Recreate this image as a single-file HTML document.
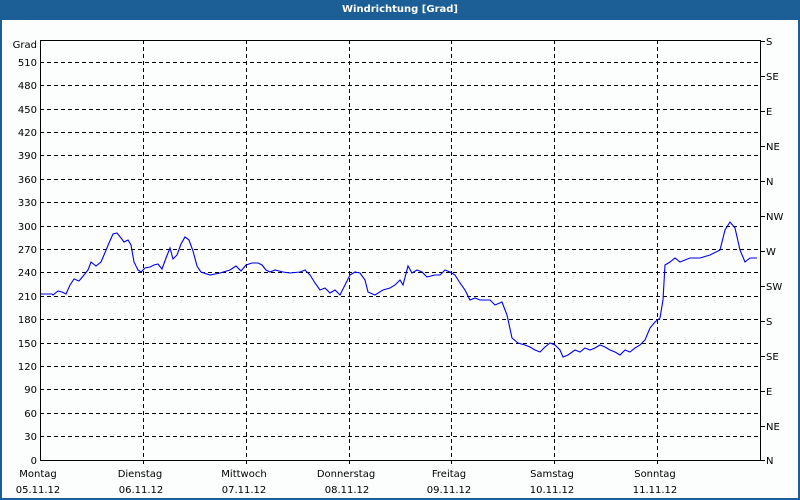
<!DOCTYPE html>
<html><head><meta charset="utf-8"><style>
html,body{margin:0;padding:0}
body{width:800px;height:500px;background:#1b5f96;position:relative;overflow:hidden;font-family:"DejaVu Sans","Liberation Sans",sans-serif}
.t{position:absolute;left:0;top:0;width:800px;height:20px;line-height:19px;text-align:center;color:#fff;font-weight:bold;font-size:10px}
.c{position:absolute;left:2px;top:20px;width:796px;height:478px;background:#fcfdfd}
svg{position:absolute;left:0;top:0}
</style></head><body>
<div class="t">Windrichtung [Grad]</div>
<div class="c"></div>
<svg width="800" height="500" font-family="DejaVu Sans, Liberation Sans, sans-serif" font-size="10" fill="#000">
<g stroke="#000" stroke-dasharray="4,3" stroke-width="1">
<line x1="40" x2="760" y1="62.5" y2="62.5"/><line x1="40" x2="760" y1="85.5" y2="85.5"/><line x1="40" x2="760" y1="109.5" y2="109.5"/><line x1="40" x2="760" y1="132.5" y2="132.5"/><line x1="40" x2="760" y1="155.5" y2="155.5"/><line x1="40" x2="760" y1="179.5" y2="179.5"/><line x1="40" x2="760" y1="202.5" y2="202.5"/><line x1="40" x2="760" y1="226.5" y2="226.5"/><line x1="40" x2="760" y1="249.5" y2="249.5"/><line x1="40" x2="760" y1="272.5" y2="272.5"/><line x1="40" x2="760" y1="296.5" y2="296.5"/><line x1="40" x2="760" y1="319.5" y2="319.5"/><line x1="40" x2="760" y1="343.5" y2="343.5"/><line x1="40" x2="760" y1="366.5" y2="366.5"/><line x1="40" x2="760" y1="389.5" y2="389.5"/><line x1="40" x2="760" y1="413.5" y2="413.5"/><line x1="40" x2="760" y1="436.5" y2="436.5"/>
<line y1="40" y2="464" x1="143.5" x2="143.5"/><line y1="40" y2="464" x1="246.5" x2="246.5"/><line y1="40" y2="464" x1="349.5" x2="349.5"/><line y1="40" y2="464" x1="451.5" x2="451.5"/><line y1="40" y2="464" x1="554.5" x2="554.5"/><line y1="40" y2="464" x1="657.5" x2="657.5"/>
</g>
<rect x="40.5" y="40.5" width="720" height="420" fill="none" stroke="#000"/>
<g stroke="#000"><line x1="761" x2="765" y1="41.5" y2="41.5"/><line x1="761" x2="765" y1="76.5" y2="76.5"/><line x1="761" x2="765" y1="111.5" y2="111.5"/><line x1="761" x2="765" y1="146.5" y2="146.5"/><line x1="761" x2="765" y1="181.5" y2="181.5"/><line x1="761" x2="765" y1="216.5" y2="216.5"/><line x1="761" x2="765" y1="251.5" y2="251.5"/><line x1="761" x2="765" y1="286.5" y2="286.5"/><line x1="761" x2="765" y1="321.5" y2="321.5"/><line x1="761" x2="765" y1="356.5" y2="356.5"/><line x1="761" x2="765" y1="391.5" y2="391.5"/><line x1="761" x2="765" y1="426.5" y2="426.5"/><line x1="761" x2="765" y1="460.5" y2="460.5"/></g>
<g text-anchor="end">
<text x="37" y="48">Grad</text><text x="37" y="66">510</text><text x="37" y="89">480</text><text x="37" y="113">450</text><text x="37" y="136">420</text><text x="37" y="159">390</text><text x="37" y="183">360</text><text x="37" y="206">330</text><text x="37" y="230">300</text><text x="37" y="253">270</text><text x="37" y="276">240</text><text x="37" y="300">210</text><text x="37" y="323">180</text><text x="37" y="347">150</text><text x="37" y="370">120</text><text x="37" y="393">90</text><text x="37" y="417">60</text><text x="37" y="440">30</text><text x="37" y="464">0</text>
</g>
<g>
<text x="766" y="45">S</text><text x="766" y="80">SE</text><text x="766" y="115">E</text><text x="766" y="150">NE</text><text x="766" y="185">N</text><text x="766" y="220">NW</text><text x="766" y="255">W</text><text x="766" y="290">SW</text><text x="766" y="325">S</text><text x="766" y="360">SE</text><text x="766" y="395">E</text><text x="766" y="430">NE</text><text x="766" y="464">N</text>
</g>
<g text-anchor="middle">
<text x="38" y="477">Montag</text><text x="38" y="493">05.11.12</text>
<text x="140" y="477">Dienstag</text><text x="141" y="493">06.11.12</text>
<text x="244" y="477">Mittwoch</text><text x="244" y="493">07.11.12</text>
<text x="346" y="477">Donnerstag</text><text x="347" y="493">08.11.12</text>
<text x="449" y="477">Freitag</text><text x="449" y="493">09.11.12</text>
<text x="552" y="477">Samstag</text><text x="552" y="493">10.11.12</text>
<text x="655" y="477">Sonntag</text><text x="655" y="493">11.11.12</text>
</g>
<polyline fill="none" stroke="#0000ee" stroke-width="1.1" points="41,294 52,294 53,295 58,291 62,292 66,294 70,285 74,279 79,281 84,275 88,270 91,262 96,266 101,262 104,255 109,243 113,234 117,233 121,238 124,242 128,240 131,245 134,262 138,270 141,272 145,268 150,267 154,265 158,264 162,269 166,258 170,248 173,259 177,255 181,244 185,237 189,240 193,251 197,266 201,272 210,275 220,273 230,270 236,266 241,271 246,265 252,263 258,263 262,265 266,270 270,272 275,270 283,272 290,273 300,272 305,270 310,275 315,283 320,290 325,288 330,293 335,290 340,295 345,285 350,275 355,272 360,273 365,280 368,292 375,295 383,290 390,288 395,285 400,280 403,285 408,266 412,273 417,270 422,272 427,277 435,275 440,275 445,270 450,272 455,275 460,283 465,290 470,300 475,298 480,300 490,300 495,305 502,302 507,315 512,338 518,343 525,345 530,347 535,350 540,352 545,347 550,343 555,345 560,350 563,357 568,355 575,350 580,352 585,348 590,350 595,348 600,345 605,347 610,350 615,352 620,355 625,350 630,352 635,348 640,345 645,340 650,328 655,322 660,318 663,300 665,265 670,262 675,258 680,262 690,258 700,258 710,255 720,250 725,230 730,222 735,228 740,250 745,262 750,258 757,258"/>
</svg>
</body></html>
